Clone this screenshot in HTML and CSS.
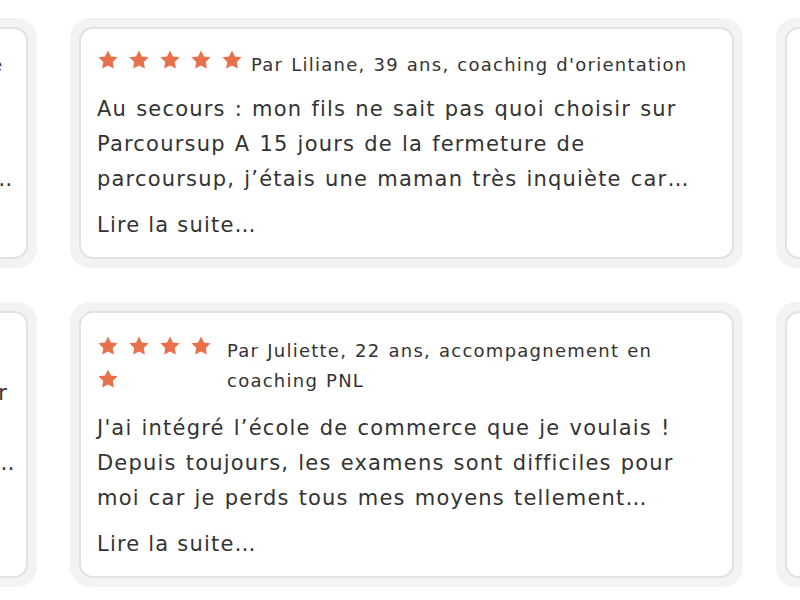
FILE: index.html
```html
<!DOCTYPE html>
<html lang="fr">
<head>
<meta charset="utf-8">
<title>Témoignages</title>
<link rel="stylesheet" href="styles.css">
</head>
<body>
<svg width="0" height="0" class="defs" aria-hidden="true">
  <defs>
    <symbol id="star" viewBox="0 0 24 24">
      <polygon points="12,1.6 15.2,8.1 22.4,9.1 17.2,14.2 18.4,21.3 12,17.9 5.6,21.3 6.8,14.2 1.6,9.1 8.8,8.1"/>
    </symbol>
  </defs>
</svg>
<main class="testimonials">
  <div class="track">
    <div class="card-wrap">
      <article class="card">
        <div class="meta">
          <div class="stars">
            <svg class="star"><use href="#star"/></svg><svg class="star"><use href="#star"/></svg><svg class="star"><use href="#star"/></svg><svg class="star"><use href="#star"/></svg><svg class="star"><use href="#star"/></svg>
          </div>
          <p class="author">Par Claudine, 48 ans, coaching de confiance</p>
        </div>
        <p class="quote quote--lines">Je me sentais perdue dans ma vie professionnelle<br>depuis des années et je ne savais plus vers quoi<br>me tourner. Après plusieurs échanges, j’ai compris…</p>
        <a class="more" href="#">Lire la suite…</a>
      </article>
    </div>
    <div class="card-wrap">
      <article class="card">
        <div class="meta">
          <div class="stars">
            <svg class="star"><use href="#star"/></svg><svg class="star"><use href="#star"/></svg><svg class="star"><use href="#star"/></svg><svg class="star"><use href="#star"/></svg><svg class="star"><use href="#star"/></svg>
          </div>
          <p class="author">Par Liliane, 39 ans, coaching d'orientation</p>
        </div>
        <p class="quote">Au secours : mon fils ne sait pas quoi choisir sur Parcoursup A 15 jours de la fermeture de parcoursup, j’étais une maman très inquiète car…</p>
        <a class="more" href="#">Lire la suite…</a>
      </article>
    </div>
    <div class="card-wrap">
      <article class="card"></article>
    </div>
  </div>
  <div class="track">
    <div class="card-wrap">
      <article class="card">
        <div class="meta">
          <div class="stars">
            <svg class="star"><use href="#star"/></svg><svg class="star"><use href="#star"/></svg><svg class="star"><use href="#star"/></svg><svg class="star"><use href="#star"/></svg><svg class="star"><use href="#star"/></svg>
          </div>
          <p class="author">Par Thomas, 17 ans, coaching scolaire</p>
        </div>
        <p class="quote quote--lines">Mon fils avait perdu toute motivation pour travailler<br>et nous ne savions plus comment l'aider à avancer<br>sereinement vers l'avenir, malgré toutes ses peurs…</p>
        <a class="more" href="#">Lire la suite…</a>
      </article>
    </div>
    <div class="card-wrap">
      <article class="card">
        <div class="meta">
          <div class="stars stars--narrow">
            <svg class="star"><use href="#star"/></svg><svg class="star"><use href="#star"/></svg><svg class="star"><use href="#star"/></svg><svg class="star"><use href="#star"/></svg><svg class="star"><use href="#star"/></svg>
          </div>
          <p class="author">Par Juliette, 22 ans, accompagnement en coaching PNL</p>
        </div>
        <p class="quote">J'ai intégré l’école de commerce que je voulais ! Depuis toujours, les examens sont difficiles pour moi car je perds tous mes moyens tellement…</p>
        <a class="more" href="#">Lire la suite…</a>
      </article>
    </div>
    <div class="card-wrap">
      <article class="card"></article>
    </div>
  </div>
</main>
</body>
</html>
```
FILE: styles.css
```css
html, body {
  margin: 0;
  padding: 0;
  background: #ffffff;
  overflow: hidden;
}

body {
  width: 800px;
  height: 600px;
  font-family: "DejaVu Sans", "Open Sans", sans-serif;
  color: #333333;
}

.defs {
  position: absolute;
  width: 0;
  height: 0;
}

.testimonials {
  display: flex;
  flex-direction: column;
  gap: 34px;
  padding-top: 18px;
}

.track {
  display: flex;
  gap: 33px;
  margin-left: -636px;
}

.card-wrap {
  flex: 0 0 673px;
  width: 673px;
  min-width: 0;
  box-sizing: border-box;
  padding: 9px;
  background: #f3f3f3;
  border-radius: 20px;
  display: flex;
}

.card {
  flex: 1;
  min-width: 0;
  box-sizing: border-box;
  background: #ffffff;
  border: 2px solid #e2e2e2;
  border-radius: 14px;
  padding: 20px 16px 14px;
  overflow: hidden;
}

.meta {
  display: flex;
  align-items: flex-start;
  gap: 8px;
  margin-bottom: 10px;
}

.stars {
  display: flex;
  flex-wrap: wrap;
  column-gap: 9px;
  row-gap: 11px;
  flex: 0 0 auto;
  padding-bottom: 11px;
}

.stars--narrow {
  width: 122px;
  padding-top: 2px;
}

.star {
  width: 22px;
  height: 22px;
  fill: #e8704a;
  display: block;
}

.author {
  margin: 1px 0 0;
  font-size: 18px;
  line-height: 30px;
  letter-spacing: 1.25px;
  word-spacing: 1px;
}

.stars--narrow + .author {
  margin-top: 3px;
}

.quote {
  margin: 0;
  font-size: 21px;
  line-height: 35px;
  letter-spacing: 1.2px;
  word-spacing: 1.2px;
}

.quote--lines {
  white-space: nowrap;
}

.more {
  display: block;
  margin-top: 11px;
  font-size: 21px;
  line-height: 35px;
  letter-spacing: 1.2px;
  color: #333333;
  text-decoration: none;
}
```
